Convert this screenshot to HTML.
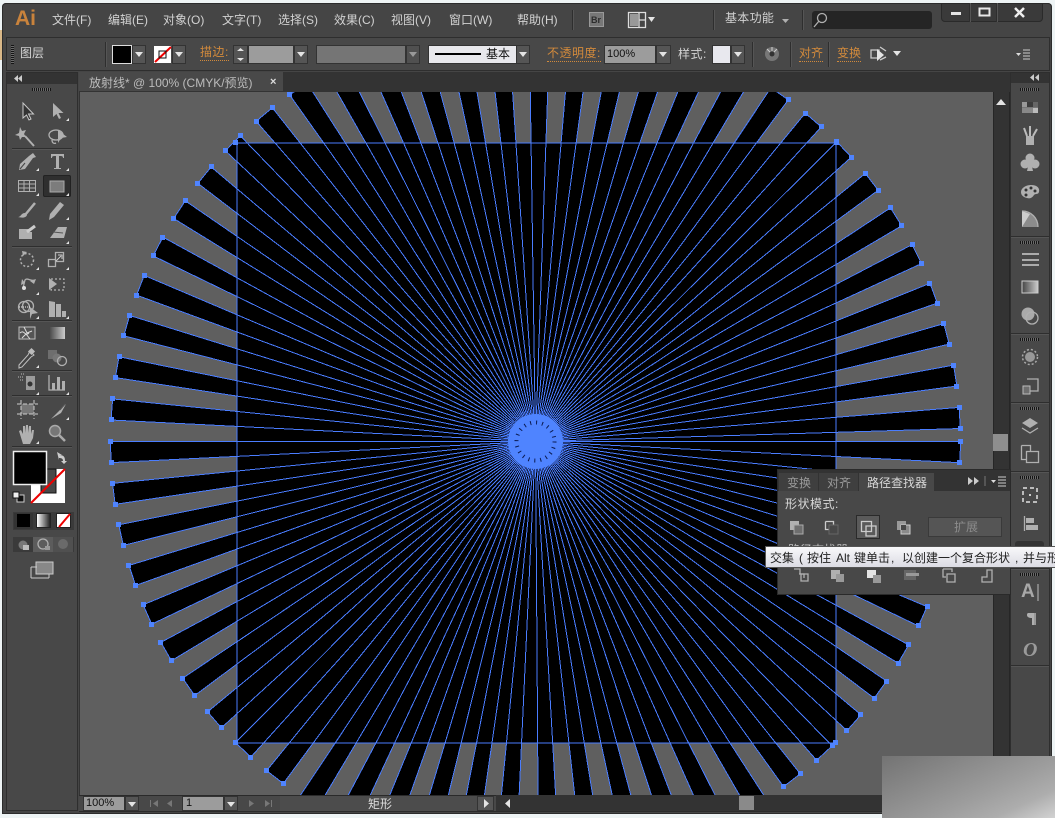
<!DOCTYPE html>
<html lang="zh"><head><meta charset="utf-8"><title>放射线</title>
<style>
html,body{margin:0;padding:0;width:1055px;height:818px;overflow:hidden;background:#eef4f5}
body{position:relative;font:12px/14px "Liberation Sans","WenQuanYi Zen Hei","Noto Sans CJK SC",sans-serif;color:#d2d2d2}
div,svg,span.t{position:absolute}
.t{white-space:nowrap}
.o{color:#d28a3c;border-bottom:1px dotted #d28a3c;line-height:15px}
.g{height:3px;background:repeating-linear-gradient(90deg,#151515 0 1px,#6a6a6a 1px 2px)}
.sep{height:1px;background:#2e2e2e;box-shadow:0 1px 0 #555}
.v{width:1px;background:#2e2e2e;box-shadow:1px 0 0 #555}
.c{background:#555;box-shadow:inset 0 0 0 1px #333}
.in{background:#9c9c9c;box-shadow:inset 0 0 0 1px #333;color:#111}
.i{fill:#b0b0b0}.d{fill:#6e6e6e}.w{fill:#e4e4e4}
.s{fill:none;stroke:#b0b0b0;stroke-width:1.3}
</style></head><body>

<!-- window -->
<div style="left:2px;top:3px;width:1050px;height:811px;background:#454545;border-radius:4px 4px 0 0;box-shadow:inset 0 0 0 1px #2c2c2c"></div>
<div style="left:0;top:30px;width:2px;height:30px;background:#d9b888"></div>

<!-- menu -->
<div class="t" style="left:15px;top:7px;font:bold 21px/24px 'Liberation Sans',sans-serif;color:#c9833c">Ai</div>
<span class="t" style="left:52px;top:13px">文件(F)</span>
<span class="t" style="left:108px;top:13px">编辑(E)</span>
<span class="t" style="left:163px;top:13px">对象(O)</span>
<span class="t" style="left:222px;top:13px">文字(T)</span>
<span class="t" style="left:278px;top:13px">选择(S)</span>
<span class="t" style="left:334px;top:13px">效果(C)</span>
<span class="t" style="left:391px;top:13px">视图(V)</span>
<span class="t" style="left:449px;top:13px">窗口(W)</span>
<span class="t" style="left:517px;top:13px">帮助(H)</span>
<div class="v" style="left:572px;top:10px;height:20px"></div>
<div class="v" style="left:713px;top:10px;height:20px"></div>
<div class="v" style="left:802px;top:10px;height:20px"></div>
<div style="left:589px;top:12px;width:15px;height:15px;background:#777;box-shadow:inset 0 0 0 1px #999"></div>
<span class="t" style="left:591px;top:13px;font-size:9px;font-weight:bold;color:#2c2c2c">Br</span>
<span class="t" style="left:725px;top:11px;font-size:12px;letter-spacing:.3px">基本功能</span>
<div style="left:812px;top:11px;width:120px;height:18px;background:#252525;border-radius:3px"></div>
<div style="left:941px;top:3px;width:102px;height:19px;background:#3a3a3a;box-shadow:inset 0 0 0 1px #2a2a2a;border-radius:0 0 4px 4px"></div>
<div class="v" style="left:969px;top:3px;height:19px"></div>
<div class="v" style="left:996px;top:3px;height:19px"></div>

<!-- control bar -->
<div style="left:6px;top:37px;width:1044px;height:34px;background:#484848;box-shadow:inset 0 0 0 1px #2e2e2e"></div>
<div style="left:11px;top:45px;width:3px;height:19px;background:repeating-linear-gradient(0deg,#151515 0 1px,#6a6a6a 1px 2px)"></div>
<span class="t" style="left:20px;top:46px;font-size:12px">图层</span>
<div class="v" style="left:105px;top:42px;height:25px"></div>
<div style="left:113px;top:46px;width:18px;height:17px;background:#000;box-shadow:0 0 0 1px #ddd"></div>
<div class="c" style="left:132px;top:45px;width:14px;height:19px"></div>
<div style="left:154px;top:46px;width:17px;height:17px;background:#fff"></div>
<div class="c" style="left:172px;top:45px;width:14px;height:19px"></div>
<span class="t o" style="left:200px;top:45px;letter-spacing:.5px">描边:</span>
<div class="c" style="left:233px;top:45px;width:15px;height:19px"></div>
<div class="in" style="left:248px;top:45px;width:46px;height:19px"></div>
<div class="c" style="left:294px;top:45px;width:14px;height:19px"></div>
<div style="left:316px;top:45px;width:90px;height:19px;background:#757575;box-shadow:inset 0 0 0 1px #333"></div>
<div class="c" style="left:406px;top:45px;width:14px;height:19px;background:#505050"></div>
<div style="left:429px;top:46px;width:87px;height:17px;background:#e8e8ec;box-shadow:0 0 0 1px #333"></div>
<div style="left:435px;top:53px;width:46px;height:2px;background:#000"></div>
<span class="t" style="left:486px;top:47px;color:#111">基本</span>
<div class="c" style="left:516px;top:45px;width:14px;height:19px"></div>
<span class="t o" style="left:547px;top:46px;letter-spacing:.5px">不透明度:</span>
<div class="in" style="left:604px;top:45px;width:52px;height:19px"></div>
<span class="t" style="left:607px;top:47px;color:#111;font-size:11px">100%</span>
<div class="c" style="left:656px;top:45px;width:15px;height:19px"></div>
<span class="t" style="left:678px;top:47px;letter-spacing:.5px">样式:</span>
<div style="left:713px;top:46px;width:17px;height:17px;background:#e8e8ee;box-shadow:0 0 0 1px #333"></div>
<div class="c" style="left:731px;top:45px;width:14px;height:19px"></div>
<div class="v" style="left:752px;top:42px;height:25px"></div>
<div class="v" style="left:790px;top:42px;height:25px"></div>
<div class="v" style="left:828px;top:42px;height:25px"></div>
<span class="t o" style="left:799px;top:46px">对齐</span>
<span class="t o" style="left:837px;top:46px">变换</span>

<!-- left tools panel -->
<div style="left:6px;top:72px;width:72px;height:739px;background:#484848;box-shadow:inset 0 0 0 1px #2e2e2e"></div>
<div style="left:7px;top:73px;width:70px;height:11px;background:#333"></div>
<div class="g" style="left:32px;top:88px;width:19px"></div>
<div class="sep" style="left:12px;top:148px;width:60px"></div>
<div class="sep" style="left:12px;top:246px;width:60px"></div>
<div class="sep" style="left:12px;top:320px;width:60px"></div>
<div class="sep" style="left:12px;top:370px;width:60px"></div>
<div class="sep" style="left:12px;top:395px;width:60px"></div>
<div class="sep" style="left:12px;top:446px;width:60px"></div>
<div style="left:43px;top:175px;width:28px;height:22px;background:#2f2f2f;border-radius:2px;box-shadow:inset 0 0 0 1px #222"></div>
<div style="left:13px;top:512px;width:61px;height:18px;background:#3a3a3a"></div>
<div style="left:14px;top:513px;width:19px;height:16px;background:#333"></div>
<div style="left:17px;top:514px;width:13px;height:13px;background:#000"></div>
<div style="left:37px;top:514px;width:13px;height:13px;background:linear-gradient(90deg,#fff,#222);box-shadow:0 0 0 1px #222"></div>
<div style="left:57px;top:514px;width:13px;height:13px;background:#fff;box-shadow:0 0 0 1px #222"></div>
<div style="left:13px;top:537px;width:61px;height:15px;background:#3a3a3a"></div>
<div style="left:33px;top:537px;width:20px;height:15px;background:#5c5c5c"></div>
<div style="left:53px;top:537px;width:20px;height:15px;background:#505050"></div>

<!-- tab strip & canvas -->
<div style="left:79px;top:72px;width:931px;height:20px;background:#333"></div>
<div style="left:79px;top:72px;width:204px;height:19px;background:#494949"></div>
<span class="t" style="left:89px;top:76px;color:#bcbcbc">放射线* @ 100% (CMYK/预览)</span>
<span class="t" style="left:270px;top:75px;color:#ddd;font-weight:bold;font-size:11px">×</span>
<div style="left:79px;top:92px;width:914px;height:703px;background:#5f5f5f;box-shadow:inset 1px 0 0 #333"></div>

<svg style="left:79px;top:92px" width="914" height="703" viewBox="79 92 914 703">
<defs>
<path id="w" d="M0 0L-425 0L-424.47 21.14Z" fill="#000"/>
<path id="w4" d="M0 0L-400 0L-399.5 19.9Z" fill="#000"/>
<path id="w3" d="M0 0L-385 0L-384.5 19.1Z" fill="#000"/>
<path id="w2" d="M0 0L-370 0L-369.5 18.4Z" fill="#000"/>
<path id="l" d="M0 0L-425 0L-424.47 21.14Z" fill="none" stroke="#4a7dff" shape-rendering="crispEdges"/>
<path id="l4" d="M0 0L-400 0M0 0L-399.5 19.9" fill="none" stroke="#4a7dff" shape-rendering="crispEdges"/>
<path id="l3" d="M0 0L-385 0M0 0L-384.5 19.1" fill="none" stroke="#4a7dff" shape-rendering="crispEdges"/>
<path id="l2" d="M0 0L-370 0M0 0L-369.5 18.4" fill="none" stroke="#4a7dff" shape-rendering="crispEdges"/>
</defs>
<g transform="translate(535.5 441.5)">
<use href="#w"/><use href="#w" transform="rotate(5.75)"/><use href="#w" transform="rotate(11.5)"/><use href="#w" transform="rotate(17.25)"/><use href="#w" transform="rotate(23)"/><use href="#w" transform="rotate(28.75)"/><use href="#w" transform="rotate(34.5)"/><use href="#w" transform="rotate(40.25)"/><use href="#w" transform="rotate(46)"/><use href="#w" transform="rotate(51.75)"/><use href="#w" transform="rotate(57.5)"/><use href="#w" transform="rotate(63.25)"/><use href="#w" transform="rotate(69)"/><use href="#w" transform="rotate(74.75)"/><use href="#w" transform="rotate(80.5)"/><use href="#w" transform="rotate(86.25)"/><use href="#w" transform="rotate(92)"/><use href="#w" transform="rotate(97.75)"/><use href="#w" transform="rotate(103.5)"/><use href="#w" transform="rotate(109.25)"/><use href="#w" transform="rotate(115)"/><use href="#w" transform="rotate(120.75)"/><use href="#w" transform="rotate(126.5)"/><use href="#w" transform="rotate(132.25)"/><use href="#w" transform="rotate(138)"/><use href="#w" transform="rotate(143.75)"/><use href="#w" transform="rotate(149.5)"/><use href="#w" transform="rotate(155.25)"/><use href="#w" transform="rotate(161)"/><use href="#w" transform="rotate(166.75)"/><use href="#w" transform="rotate(172.5)"/><use href="#w" transform="rotate(178.25)"/>
<use href="#w" transform="rotate(182.86)"/><use href="#w" transform="rotate(188.58)"/><use href="#w" transform="rotate(194.29)"/><use href="#w" transform="rotate(200.01)"/><use href="#w" transform="rotate(205.72)"/><use href="#w" transform="rotate(211.44)"/><use href="#w" transform="rotate(217.16)"/><use href="#w" transform="rotate(222.87)"/><use href="#w" transform="rotate(228.59)"/><use href="#w" transform="rotate(234.3)"/><use href="#w" transform="rotate(240.02)"/>
<use href="#w4" transform="rotate(245.93)"/><use href="#w3" transform="rotate(251.84)"/><use href="#w2" transform="rotate(257.76)"/><use href="#w2" transform="rotate(263.67)"/><use href="#w2" transform="rotate(269.59)"/><use href="#w2" transform="rotate(275.5)"/><use href="#w2" transform="rotate(281.07)"/><use href="#w2" transform="rotate(286.7)"/><use href="#w3" transform="rotate(292.4)"/><use href="#w4" transform="rotate(297.9)"/>
<use href="#w" transform="rotate(303.6)"/><use href="#w" transform="rotate(309.25)"/><use href="#w" transform="rotate(314.9)"/><use href="#w" transform="rotate(320.5)"/><use href="#w" transform="rotate(326.15)"/><use href="#w" transform="rotate(331.8)"/><use href="#w" transform="rotate(337.4)"/><use href="#w" transform="rotate(343.05)"/><use href="#w" transform="rotate(348.7)"/><use href="#w" transform="rotate(354.35)"/>
</g>
<rect x="237" y="143" width="599" height="600" fill="#000"/>
<g transform="translate(535.5 441.5)">
<use href="#l"/><use href="#l" transform="rotate(5.75)"/><use href="#l" transform="rotate(11.5)"/><use href="#l" transform="rotate(17.25)"/><use href="#l" transform="rotate(23)"/><use href="#l" transform="rotate(28.75)"/><use href="#l" transform="rotate(34.5)"/><use href="#l" transform="rotate(40.25)"/><use href="#l" transform="rotate(46)"/><use href="#l" transform="rotate(51.75)"/><use href="#l" transform="rotate(57.5)"/><use href="#l" transform="rotate(63.25)"/><use href="#l" transform="rotate(69)"/><use href="#l" transform="rotate(74.75)"/><use href="#l" transform="rotate(80.5)"/><use href="#l" transform="rotate(86.25)"/><use href="#l" transform="rotate(92)"/><use href="#l" transform="rotate(97.75)"/><use href="#l" transform="rotate(103.5)"/><use href="#l" transform="rotate(109.25)"/><use href="#l" transform="rotate(115)"/><use href="#l" transform="rotate(120.75)"/><use href="#l" transform="rotate(126.5)"/><use href="#l" transform="rotate(132.25)"/><use href="#l" transform="rotate(138)"/><use href="#l" transform="rotate(143.75)"/><use href="#l" transform="rotate(149.5)"/><use href="#l" transform="rotate(155.25)"/><use href="#l" transform="rotate(161)"/><use href="#l" transform="rotate(166.75)"/><use href="#l" transform="rotate(172.5)"/><use href="#l" transform="rotate(178.25)"/>
<use href="#l" transform="rotate(182.86)"/><use href="#l" transform="rotate(188.58)"/><use href="#l" transform="rotate(194.29)"/><use href="#l" transform="rotate(200.01)"/><use href="#l" transform="rotate(205.72)"/><use href="#l" transform="rotate(211.44)"/><use href="#l" transform="rotate(217.16)"/><use href="#l" transform="rotate(222.87)"/><use href="#l" transform="rotate(228.59)"/><use href="#l" transform="rotate(234.3)"/><use href="#l" transform="rotate(240.02)"/>
<use href="#l4" transform="rotate(245.93)"/><use href="#l3" transform="rotate(251.84)"/><use href="#l2" transform="rotate(257.76)"/><use href="#l2" transform="rotate(263.67)"/><use href="#l2" transform="rotate(269.59)"/><use href="#l2" transform="rotate(275.5)"/><use href="#l2" transform="rotate(281.07)"/><use href="#l2" transform="rotate(286.7)"/><use href="#l3" transform="rotate(292.4)"/><use href="#l4" transform="rotate(297.9)"/>
<use href="#l" transform="rotate(303.6)"/><use href="#l" transform="rotate(309.25)"/><use href="#l" transform="rotate(314.9)"/><use href="#l" transform="rotate(320.5)"/><use href="#l" transform="rotate(326.15)"/><use href="#l" transform="rotate(331.8)"/><use href="#l" transform="rotate(337.4)"/><use href="#l" transform="rotate(343.05)"/><use href="#l" transform="rotate(348.7)"/><use href="#l" transform="rotate(354.35)"/>
<circle r="27.5" fill="#4f84ff"/>
<circle r="19" fill="none" stroke="#0a1a50" stroke-width="4" stroke-dasharray="1 5"/>
<circle r="14" fill="#4f84ff"/>
</g>
<rect x="237" y="143" width="599" height="600" fill="none" stroke="#4a7dff" stroke-width="1" shape-rendering="crispEdges"/>
<g id="anch" fill="#4f84ff" shape-rendering="crispEdges"><rect x="233" y="140" width="5" height="5"/><rect x="834" y="140" width="5" height="5"/><rect x="233" y="740" width="5" height="5"/><rect x="833" y="740" width="5" height="5"/></g>
</svg>
<script>
(function(){var g=document.getElementById('anch'),t=[],i;
for(i=0;i<32;i++)t.push(5.75*i);
[182.86,188.58,194.29,200.01,205.72,211.44,217.16,222.87,228.59,234.3,240.02,303.6,309.25,314.9,320.5,326.15,331.8,337.4,343.05,348.7,354.35].forEach(function(a){t.push(a)});
t.forEach(function(a){[a,a-2.85].forEach(function(b){var r=b*Math.PI/180,x=535.5-425*Math.cos(r),y=441.5-425*Math.sin(r);
if(y<94||y>792)return;var e=document.createElementNS('http://www.w3.org/2000/svg','rect');
e.setAttribute('x',Math.round(x-2.5));e.setAttribute('y',Math.round(y-2.5));e.setAttribute('width',5);e.setAttribute('height',5);g.appendChild(e);});});})();
</script>

<!-- vertical scrollbar -->
<div style="left:993px;top:92px;width:17px;height:703px;background:#333;box-shadow:inset -1px 0 0 #262626,inset 1px 0 0 #262626"></div>
<div style="left:993px;top:434px;width:15px;height:17px;background:#8e8e8e"></div>

<!-- right dock -->
<div style="left:1010px;top:72px;width:40px;height:739px;background:#484848;box-shadow:inset 0 0 0 1px #2e2e2e"></div>
<div style="left:1011px;top:73px;width:38px;height:10px;background:#333"></div>
<div class="sep" style="left:1011px;top:236px;width:38px"></div>
<div class="sep" style="left:1011px;top:333px;width:38px"></div>
<div class="sep" style="left:1011px;top:402px;width:38px"></div>
<div class="sep" style="left:1011px;top:471px;width:38px"></div>
<div class="sep" style="left:1011px;top:568px;width:38px"></div>
<div class="sep" style="left:1011px;top:665px;width:38px"></div>
<div class="g" style="left:1020px;top:88px;width:19px"></div>
<div class="g" style="left:1020px;top:241px;width:19px"></div>
<div class="g" style="left:1020px;top:338px;width:19px"></div>
<div class="g" style="left:1020px;top:407px;width:19px"></div>
<div class="g" style="left:1020px;top:476px;width:19px"></div>
<div class="g" style="left:1020px;top:573px;width:19px"></div>
<div style="left:1015px;top:541px;width:29px;height:20px;background:#333;border-radius:3px"></div>
<span class="t" style="left:1021px;top:582px;font:bold 19px/20px 'Liberation Sans',sans-serif;color:#a8a8a8">A</span>
<span class="t" style="left:1023px;top:640px;font:italic bold 20px/20px 'Liberation Serif',serif;color:#9a9a9a">O</span>

<!-- status bar -->
<div style="left:79px;top:795px;width:931px;height:17px;background:#484848;box-shadow:inset 0 1px 0 #2a2a2a,inset 0 -1px 0 #2a2a2a"></div>
<div class="in" style="left:83px;top:796px;width:42px;height:15px"></div>
<span class="t" style="left:86px;top:796px;color:#111;font-size:11px">100%</span>
<div class="c" style="left:125px;top:796px;width:14px;height:15px"></div>
<div class="in" style="left:182px;top:796px;width:42px;height:15px"></div>
<span class="t" style="left:186px;top:796px;color:#111;font-size:11px">1</span>
<div class="c" style="left:224px;top:796px;width:14px;height:15px"></div>
<div style="left:280px;top:796px;width:197px;height:15px;background:#4c4c4c"></div>
<span class="t" style="left:368px;top:797px;color:#ddd">矩形</span>
<div class="c" style="left:477px;top:796px;width:17px;height:15px"></div>
<div style="left:496px;top:795px;width:497px;height:16px;background:#333"></div>
<div style="left:739px;top:796px;width:15px;height:14px;background:#8a8a8a"></div>

<!-- pathfinder panel -->
<div style="left:778px;top:470px;width:232px;height:124px;background:#484848;box-shadow:0 0 0 1px #2a2a2a"></div>
<div style="left:778px;top:470px;width:232px;height:21px;background:#333"></div>
<div style="left:779px;top:473px;width:39px;height:18px;background:#3f3f3f"></div>
<div style="left:819px;top:473px;width:39px;height:18px;background:#3f3f3f"></div>
<div style="left:859px;top:473px;width:75px;height:18px;background:#484848"></div>
<span class="t" style="left:787px;top:476px;color:#9a9a9a">变换</span>
<span class="t" style="left:827px;top:476px;color:#9a9a9a">对齐</span>
<span class="t" style="left:867px;top:476px;color:#d8d8d8">路径查找器</span>
<span class="t" style="left:785px;top:497px;letter-spacing:.5px;color:#d8d8d8">形状模式:</span>
<div style="left:856px;top:515px;width:24px;height:24px;background:#5a5a5a;box-shadow:inset 0 0 0 1px #2a2a2a"></div>
<div style="left:928px;top:517px;width:74px;height:20px;background:#555;box-shadow:inset 0 0 0 1px #3a3a3a"></div>
<span class="t" style="left:954px;top:520px;color:#8c8c8c">扩展</span>
<span class="t" style="left:788px;top:543px;color:#c0c0c0">路径查找器:</span>

<!-- icons overlay -->
<svg style="left:0;top:0" width="1055" height="818" viewBox="0 0 1055 818">
<defs><linearGradient id="gr"><stop offset="0" stop-color="#444"/><stop offset="1" stop-color="#ccc"/></linearGradient></defs>
<!-- top small -->
<path class="s" d="M628.5 12.5h17v15h-17zM639 12.5v15M639 20h6.500" style="stroke:#ddd"/><rect x="630" y="14" width="8" height="12" fill="#999"/>
<path class="w" d="M648 17h7l-3.500 5z"/><path class="i" d="M782 19h7l-3.500 4z"/>
<circle class="s" cx="822" cy="18" r="4.500"/><path class="s" d="M819 21l-5 6"/>
<rect class="w" x="951" y="12" width="10" height="3"/><path d="M979.500 8.500h10v7h-10z" fill="none" stroke="#e8e8e8" stroke-width="2"/><path d="M1015 8l9 9M1024 8l-9 9" stroke="#eee" stroke-width="2.500"/>
<!-- dropdown triangles control bar -->
<g class="w"><path d="M135 52h8l-4 5zM175 52h8l-4 5zM297 52h8l-4 5zM519 52h8l-4 5zM659 52h8l-4 5zM734 52h8l-4 5zM893 51h8l-4 5z"/><path d="M237 51l3.500-3 3.500 3zM237 58l3.500 3 3.500-3z"/></g>
<path d="M409 52h8l-4 5z" fill="#999"/>
<path d="M155 62L171 47" stroke="#e00" stroke-width="2"/><rect x="159" y="51" width="7" height="7" fill="none" stroke="#111"/>
<circle cx="772" cy="54" r="7" fill="#777"/><circle cx="772" cy="54" r="2.500" fill="#333"/><path d="M772 47v4M767 49l3 3M777 49l-3 3" stroke="#ccc"/>
<path class="s" d="M871 50h8v8h-8zM880 47l6 4M880 60l6-3" style="stroke:#ccc"/><path class="w" d="M877 49l7 6-7 6z"/>
<path d="M1016 53h5l-2.500 3z" fill="#ddd"/><path d="M1023 50h7M1023 53h7M1023 56h7M1023 59h7" stroke="#ccc"/>
<path d="M18 75l-4 3.500 4 3.500zM22 75l-4 3.500 4 3.500zM1034 74l-4 3.500 4 3.500zM1039 74l-4 3.500 4 3.500z" fill="#ccc"/>
<!-- row triangles -->
<g class="w"><path d="M69 118v3h-3zM39 168v3h-3zM69 168v3h-3zM39 193v3h-3zM69 193v3h-3zM69 217v3h-3zM69 241v3h-3zM39 267v3h-3zM69 267v3h-3zM39 292v3h-3zM39 316v3h-3zM69 316v3h-3zM39 365v3h-3zM39 392v3h-3zM69 392v3h-3zM69 417v3h-3zM39 441v3h-3z"/></g>
<!-- tools -->
<path d="M23 103l0 15 3.500-3 2.500 5 2-1-2.500-5 5 0z" fill="#333" stroke="#c8c8c8"/>
<path class="i" d="M53 103v14l3.500-3 2.500 5 2-1-2.500-5h5z"/>
<path d="M20 127l2 4 4-1-2 4 2 3-4 0-2 3-1-4-4-1 4-2z" class="i"/><path d="M25 136l9 10" stroke="#b0b0b0" stroke-width="2"/>
<ellipse class="s" cx="56" cy="135" rx="7" ry="5"/><path class="i" d="M58 130l9 7-6 1-3 5z"/><path class="s" d="M52 140c0 3 2 4 4 3"/>
<path class="i" d="M33 153l3 4-3 1-8 11-6 1 1-6 9-8z"/><path d="M20 169l5-6" stroke="#444"/>
<path class="i" d="M51 154h13v4h-1c0-2-1-2-4-2v12h2v1h-7v-1h2v-12c-3 0-4 0-4 2h-1z"/>
<path d="M18.500 180.500h17v11h-17zM18 184h17M18 188h17M24 180v11M29.500 180v11" fill="none" stroke="#b0b0b0"/>
<rect x="50" y="181" width="14" height="11" fill="#7c7c7c" stroke="#aaa"/>
<path d="M35 203l-10 12" stroke="#b0b0b0" stroke-width="2.500"/><path class="i" d="M18 217c3 0 3-4 7-4l2 2c-1 3-5 3-9 2z"/>
<path class="i" d="M60 202l4 3-10 12-5 3 1-6z"/>
<path class="i" d="M19 229h12l-3 3 4 0v7H19z"/><path d="M27 232l8-6" stroke="#ccc" stroke-width="3"/>
<path class="i" d="M58 227h9l-3 11H50z"/><path d="M53 232l10 1" stroke="#555"/>
<circle cx="27" cy="260" r="6.500" fill="none" stroke="#b0b0b0" stroke-width="1.500" stroke-dasharray="2 2"/><path class="i" d="M22 251l5 1-4 4z"/>
<path class="s" d="M55.500 252.500h8v9h-8zM48.500 259.500h7v7h-7z"/><path d="M56 261l5-5M58 255h4v4" stroke="#ccc" fill="none"/>
<path class="s" d="M23 288l2-8c2-3 6 2 10 0"/><circle cx="24" cy="288" r="2" fill="#ddd"/><path class="i" d="M22 279l3 4-4 2z"/><path class="i" d="M30 281l6-2-2 5z"/>
<path d="M51 279h13v11H51z" fill="none" stroke="#ccc" stroke-dasharray="2 2"/><path class="i" d="M49 278l8 6-8 6z"/>
<circle class="s" cx="24" cy="307" r="5.500"/><circle class="s" cx="28" cy="306" r="5.500"/><path d="M19 307h12" stroke="#eee" stroke-dasharray="1 1"/><path class="i" d="M30 307l8 6-6 1-2 5z"/>
<path class="i" d="M49 301l6 1v15h-6zM56 304h5v13h-5zM62 311h4v6h-4z"/>
<rect x="19" y="327" width="16" height="12" fill="#555" stroke="#bbb"/><path d="M20 333c4-4 5 4 9 0M24 327l3 6 5-2M22 338l4-4 4 5" fill="none" stroke="#ddd"/>
<rect x="49" y="327" width="16" height="12" fill="url(#gr)"/>
<path d="M30 351l4 4-3 2-9 10-3 1 0-3 9-10z" fill="#444" stroke="#c0c0c0"/><rect x="29" y="349" width="5" height="5" transform="rotate(45 31.500 351.500)" fill="#bbb"/>
<rect x="48" y="350" width="9" height="9" class="d"/><circle cx="57" cy="358" r="4.500" fill="#777"/><circle class="s" cx="62" cy="361" r="4.500"/>
<rect class="i" x="26" y="376" width="9" height="14" fill-opacity=".8"/><circle cx="30" cy="384" r="2.500" fill="#333"/><path d="M18 377h6M20 380h4M21 374h4" stroke="#bbb" stroke-dasharray="1 1"/>
<path class="s" d="M49 375v15h16"/><path class="i" d="M52 383h3v7h-3zM57 377h3v13h-3zM62 381h3v9h-3z"/>
<rect x="21" y="404" width="13" height="10" fill="#777"/><path d="M21 400v19M34 400v19M17 404h21M17 414h21" stroke="#ccc" stroke-dasharray="4 2"/>
<path class="i" d="M66 404l-5 9-10 6z"/><path d="M60 410l5-6" stroke="#555"/>
<path class="i" d="M19 431l2-1 2 4v-8h2v7l1-8h2l0 8 1-7h2l0 8 1-4h2l-1 8-3 6h-7z"/>
<circle cx="55" cy="431" r="5.500" fill="#777" stroke="#aaa" stroke-width="1.500"/><path d="M59 435l6 6" stroke="#aaa" stroke-width="2.500"/>
<!-- fill stroke -->
<rect x="31" y="469" width="34" height="34" fill="#fff"/><rect x="41" y="469" width="15" height="24" fill="#484848" stroke="#111"/>
<path d="M31 503l34-34" stroke="#e00" stroke-width="2"/>
<rect x="13.500" y="451.500" width="33" height="33" fill="#000" stroke="#eee" stroke-width="1.500"/>
<path d="M57 452l5 3h-3v0c5 0 6 2 6 6l2 0-3 3-3-3h2c0-2-1-3-4-3v2z" fill="#ccc"/>
<rect x="17" y="495" width="7" height="7" fill="#111" stroke="#ccc"/><rect x="13" y="492" width="6" height="6" fill="#eee" stroke="#111"/>
<path d="M59 527l11-13" stroke="#e00" stroke-width="2"/>
<circle cx="23" cy="545" r="4.500" fill="#777"/><rect x="23" y="545" width="6" height="5" fill="#bbb"/><circle class="s" cx="43" cy="544" r="5"/><rect x="45" y="546" width="5" height="4" fill="#999"/><circle cx="63" cy="544" r="5" fill="#6a6a6a"/>
<rect x="36" y="562" width="17" height="12" fill="#888" stroke="#ccc"/><path d="M31 567h6M31 578h18M31 567v11M49 574v4" stroke="#ccc" fill="none"/>
<!-- scrollbar arrow -->
<path class="w" d="M996 105l5-6 5 6z"/>
<!-- dock icons -->
<g shape-rendering="crispEdges"><rect x="1022" y="102" width="16" height="11" fill="#777"/><rect x="1022" y="102" width="5" height="5" fill="#999"/><rect x="1027" y="102" width="6" height="5" fill="#3c3c3c"/><rect x="1033" y="102" width="5" height="5" fill="#666"/><rect x="1022" y="108" width="5" height="5" fill="#888"/><rect x="1027" y="108" width="6" height="5" fill="#888"/><rect x="1033" y="108" width="5" height="5" fill="#bbb"/></g>
<path class="i" d="M1026 136h8v9h-8z"/><path d="M1027 136l-3-8M1030 136v-10M1033 136l4-7" stroke="#bbb" stroke-width="2"/>
<circle class="i" cx="1030" cy="158" r="4.500"/><circle class="i" cx="1025" cy="164" r="4.500"/><circle class="i" cx="1035" cy="164" r="4.500"/><path class="i" d="M1029 162h2l2 9h-6z"/>
<path class="i" d="M1021 192c0-4 5-7 10-7 6 0 9 3 8 7-1 3-3 1-5 3-2 3-4 4-7 3-4-1-6-3-6-6z"/><circle cx="1026" cy="190" r="1.500" fill="#333"/><circle cx="1031" cy="188" r="1.500" fill="#333"/><circle cx="1035" cy="191" r="1.500" fill="#333"/><circle cx="1026" cy="195" r="1.500" fill="#333"/>
<path d="M1022 211v16h16c0-9-7-16-16-16z" fill="#8c8c8c"/><path d="M1022 211l0 16 8-13z" fill="#ccc"/><path class="s" d="M1022 211c9 0 16 7 16 16"/>
<path d="M1022 254h17M1022 260h17M1022 265h17" stroke="#ccc" stroke-width="1.500"/>
<rect x="1022" y="281" width="16" height="12" fill="url(#gr)" stroke="#ccc"/>
<circle cx="1028" cy="314" r="6.500" fill="#aaa"/><circle class="s" cx="1032" cy="318" r="6"/>
<circle cx="1030" cy="357" r="5" fill="#999"/><circle cx="1030" cy="357" r="7.500" fill="none" stroke="#aaa" stroke-width="1.500" stroke-dasharray="2 2"/>
<path class="s" d="M1027 379h11v12h-8"/><rect x="1023" y="386" width="7" height="8" class="d" stroke="#bbb"/>
<path class="i" d="M1030 418l8 5-8 5-8-5z"/><path class="s" d="M1022 428l8 5 8-5" stroke-width="2"/>
<path class="s" d="M1021.500 445.500h9v6M1021.500 445.500v14h5"/><path class="s" d="M1026.500 451.500h12v11h-12z"/>
<path d="M1023 488h14v14h-14z" fill="none" stroke="#bbb" stroke-width="2" stroke-dasharray="4 3"/><rect x="1029" y="494" width="2" height="2" fill="#ccc"/>
<path class="s" d="M1024.500 516v15"/><rect class="i" x="1026" y="518" width="8" height="5"/><rect class="i" x="1026" y="525" width="12" height="5"/>
<path d="M1038 584v17" stroke="#bbb"/>
<path class="i" d="M1029 613h5v12h-2v-7c-3 0-5-1-5-3s1-2 2-2z"/><path d="M1034 613h2v12h-2" fill="#999"/>
<!-- panel icons -->
<path d="M968 477l5 4-5 4zM974 477l5 4-5 4z" fill="#ccc"/><path d="M985 476v10" stroke="#777"/><path d="M991 480h5l-2.500 3z" fill="#ddd"/><path d="M998 477h8M998 480h8M998 483h8M998 486h8" stroke="#ccc"/>
<g><rect x="790" y="521" width="9" height="9" class="i"/><rect x="794" y="525" width="9" height="9" class="d" stroke="#aaa"/></g>
<path class="s" d="M825.500 521.500h8v3M825.500 521.500v8h3" style="stroke:#ccc"/><rect x="829" y="525" width="9" height="9" fill="none" stroke="#666"/>
<path class="s" d="M861.500 521.500h10v10h-10zM866 526h10v10h-10z" style="stroke:#ccc"/>
<rect x="897" y="521" width="9" height="9" fill="#999"/><rect x="901" y="525" width="9" height="9" fill="#8a8a8a" stroke="#ccc"/><rect x="901" y="525" width="5" height="5" fill="#484848"/>
<path class="s" d="M794 569h6v5M801 574h7v7h-7z"/><path class="s" d="M799 574h5v4"/>
<path class="i" d="M831 570h9v9h-9z"/><rect x="836" y="574" width="8" height="8" fill="#999"/>
<path class="w" d="M867 570h9v8h-9z"/><rect x="873" y="575" width="8" height="8" fill="#999"/>
<rect x="904" y="570" width="12" height="10" fill="#666"/><rect x="906" y="573" width="13" height="3" fill="#999"/>
<path class="s" d="M943 569h9v3M943 569v8h3M947 574h8v8h-8z"/>
<path class="s" d="M982 577h5v-7h5v12h-10z"/>
<!-- status icons -->
<g fill="#777"><path d="M151 800v7h-1v-7zM158 800v7l-5-3.500zM172 800v7l-5-3.500zM249 800v7l5-3.500zM265 800v7l5-3.500zM271 800h1v7h-1z"/></g>
<g class="w"><path d="M128 802h8l-4 5zM227 802h8l-4 5zM484 799v9l5-4.500zM510 799v9l-5-4.500z"/></g>
</svg>

<!-- tooltip -->
<div style="left:766px;top:547px;width:289px;height:20px;overflow:hidden;background:linear-gradient(#f8f8fa,#dcdce4);box-shadow:0 0 0 1px #555;color:#222">
<span class="t" style="left:4px;top:4px">交集</span>
<span class="t" style="left:33px;top:4px">(</span>
<span class="t" style="left:41px;top:4px">按住</span>
<span class="t" style="left:70px;top:4px">Alt</span>
<span class="t" style="left:88px;top:4px">键单击</span>
<span class="t" style="left:125px;top:4px">,</span>
<span class="t" style="left:136px;top:4px">以创建一个复合形状</span>
<span class="t" style="left:249px;top:4px">,</span>
<span class="t" style="left:257px;top:4px">并与形</span>
</div>

<!-- watermark corner -->
<div style="left:882px;top:756px;width:173px;height:62px;background:linear-gradient(155deg,#737373 0%,#888 30%,#9d9d9d 60%,#adadad 80%,#d2d2d2 100%)"></div>
</body></html>
